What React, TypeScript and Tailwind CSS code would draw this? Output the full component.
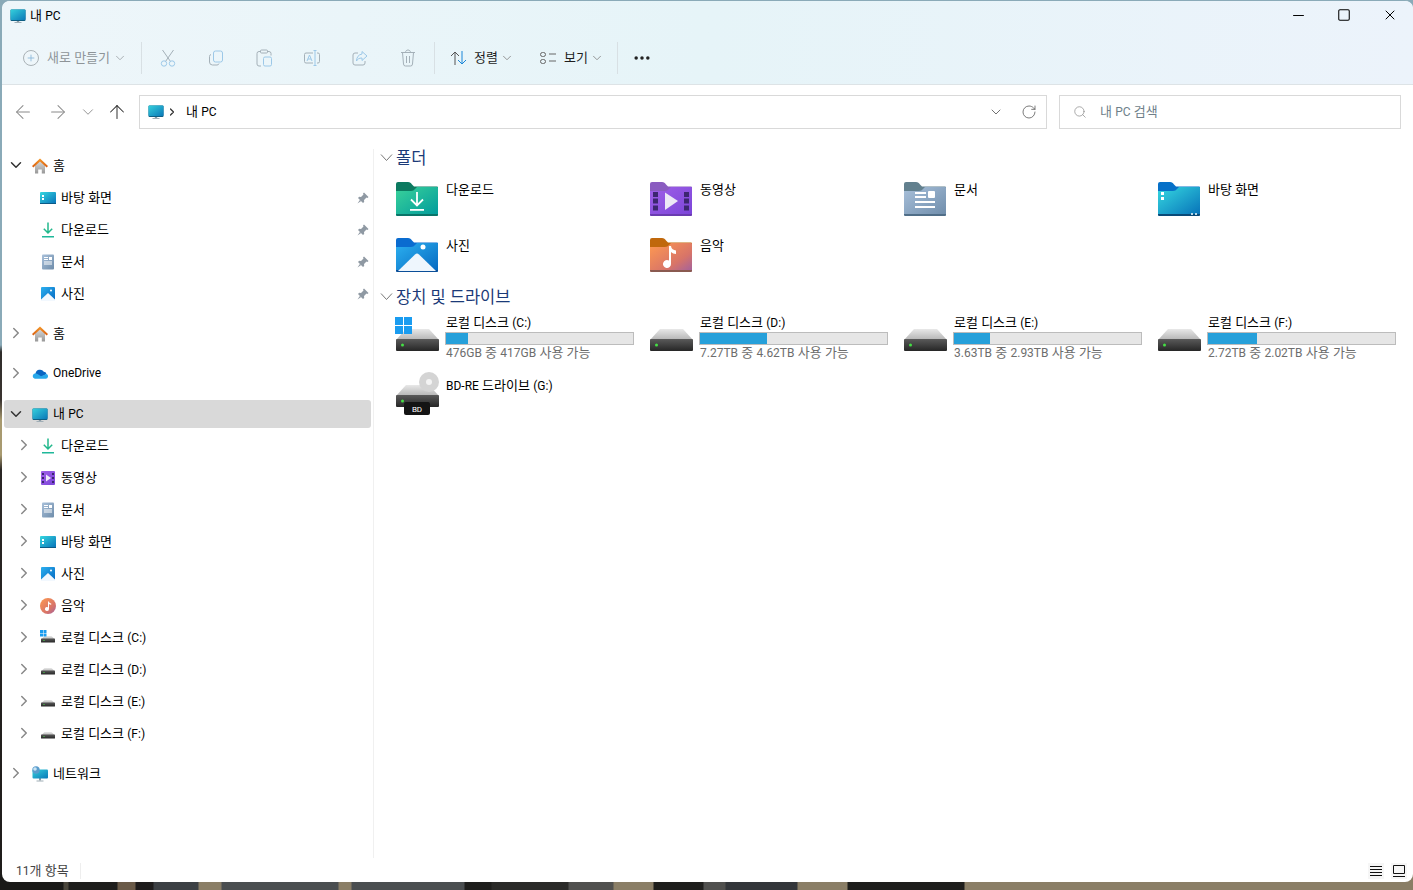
import React from 'react';
import { ChevronDown, ChevronRight, ArrowLeft, ArrowRight, ArrowUp, RotateCw, Search, Plus, MoreHorizontal, Minus, Square, X } from 'lucide-react';

const FONT = "font-['Roboto','Noto_Sans_CJK_KR',sans-serif]";

// Hangul sits a bit larger than the latin next to it, like Malgun Gothic does
function K({ t }: { t: string }) {
  return (
    <>
      {t.split(/([가-힣 ]+)/).map((part, i) =>
        /[가-힣]/.test(part) ? <span key={i} className="text-[13px]">{part}</span> : <span key={i}>{part}</span>
      )}
    </>
  );
}

function Defs() {
  return (
    <svg width="0" height="0" className="absolute">
      <defs>
        <linearGradient id="g-mon" x1="0" y1="0" x2="1" y2="1"><stop offset="0" stopColor="#35d0dc" /><stop offset="1" stopColor="#0a78b8" /></linearGradient>
        <linearGradient id="g-green" x1="0" y1="0" x2="1" y2="1"><stop offset="0" stopColor="#3ad29a" /><stop offset="1" stopColor="#009a9c" /></linearGradient>
        <linearGradient id="g-purple" x1="0" y1="0" x2="1" y2="1"><stop offset="0" stopColor="#a060e8" /><stop offset="1" stopColor="#7a44d8" /></linearGradient>
        <linearGradient id="g-doc" x1="0" y1="0" x2="1" y2="1"><stop offset="0" stopColor="#a8c0da" /><stop offset="1" stopColor="#6e8caa" /></linearGradient>
        <linearGradient id="g-desk" x1="0" y1="0" x2="1" y2="1"><stop offset="0" stopColor="#36d8e0" /><stop offset="1" stopColor="#0670b8" /></linearGradient>
        <linearGradient id="g-pic" x1="0" y1="0" x2="1" y2="1"><stop offset="0" stopColor="#2cb0f0" /><stop offset="1" stopColor="#0568c0" /></linearGradient>
        <linearGradient id="g-music" x1="0" y1="0" x2="1" y2="1"><stop offset="0" stopColor="#ff9a50" /><stop offset="0.65" stopColor="#d87468" /><stop offset="1" stopColor="#a060a0" /></linearGradient>
        <linearGradient id="g-drive" x1="0" y1="0" x2="0" y2="1"><stop offset="0" stopColor="#5a5a5a" /><stop offset="1" stopColor="#262626" /></linearGradient>
        <linearGradient id="g-top" x1="0" y1="0" x2="0" y2="1"><stop offset="0" stopColor="#e8e8e8" /><stop offset="1" stopColor="#b4b4b4" /></linearGradient>
        <linearGradient id="g-roof" x1="0" y1="0" x2="0" y2="1"><stop offset="0" stopColor="#f59a2a" /><stop offset="1" stopColor="#d85c10" /></linearGradient>
        <linearGradient id="g-house" x1="0" y1="0" x2="0" y2="1"><stop offset="0" stopColor="#d8d8d8" /><stop offset="1" stopColor="#989898" /></linearGradient>
      </defs>
    </svg>
  );
}

function Monitor({ size = 16 }: { size?: number }) {
  return (
    <svg width={size} height={size} viewBox="0 0 16 16" className="shrink-0">
      <rect x="6.800" y="12.500" width="2.400" height="2" fill="#8a9aa4" />
      <rect x="4.500" y="14" width="7" height="1" fill="#a0aeb6" />
      <rect x="0.500" y="1.500" width="15" height="11.500" rx="1" fill="#0d5f84" />
      <rect x="0.500" y="1.500" width="15" height="10.500" rx="1" fill="url(#g-mon)" />
    </svg>
  );
}

function Home() {
  return (
    <svg width="16" height="16" viewBox="0 0 16 16" className="shrink-0">
      <path d="M3 7.500 8 3l5 4.500V15.500h-3.200v-4H6.200v4H3z" fill="url(#g-house)" />
      <path d="M8 .5 0 8l1.300 1.500L8 3.500l6.700 6L16 8z" fill="url(#g-roof)" />
    </svg>
  );
}

function DeskSmall() {
  return (
    <svg width="16" height="16" viewBox="0 0 16 16" className="shrink-0">
      <rect x="0" y="2" width="16" height="12" rx="1" fill="url(#g-desk)" />
      <rect x="0" y="13" width="16" height="1" fill="#0c5a86" />
      <rect x="2" y="5" width="2" height="2" fill="#fff" />
      <rect x="2" y="8" width="2" height="2" fill="#fff" />
    </svg>
  );
}

function DownloadSmall() {
  return (
    <svg width="16" height="16" viewBox="0 0 16 16" className="shrink-0">
      <path d="M8 .5v10M3.800 6.800 8 11l4.200-4.200" fill="none" stroke="#22b88c" strokeWidth="1.500" />
      <rect x="2" y="14" width="12" height="1.500" fill="#1fb89a" />
    </svg>
  );
}

function DocSmall() {
  return (
    <svg width="16" height="16" viewBox="0 0 16 16" className="shrink-0">
      <rect x="2" y="0.500" width="12" height="15" rx="1" fill="url(#g-doc)" />
      <rect x="4" y="3" width="4" height="1" fill="#fff" /><rect x="4" y="5" width="4" height="1" fill="#fff" />
      <rect x="9" y="3" width="3" height="3" fill="#fff" />
      <rect x="4" y="7.500" width="8" height="1" fill="#fff" /><rect x="4" y="9.500" width="8" height="1" fill="#fff" />
    </svg>
  );
}

function PicSmall() {
  return (
    <svg width="16" height="16" viewBox="0 0 16 16" className="shrink-0">
      <rect x="1" y="1" width="14" height="14" rx="1" fill="url(#g-pic)" />
      <path d="M1 13.500 8 7l7 6.500V15H1z" fill="#f2f8fe" />
      <circle cx="11" cy="4.500" r="1" fill="#fff" />
    </svg>
  );
}

function VideoSmall() {
  return (
    <svg width="16" height="16" viewBox="0 0 16 16" className="shrink-0">
      <rect x="1" y="1" width="14" height="14" rx="1" fill="url(#g-purple)" />
      {[3, 7, 11].map(y => (
        <React.Fragment key={y}>
          <rect x="2" y={y} width="2" height="2" fill="#3c2670" />
          <rect x="12" y={y} width="2" height="2" fill="#3c2670" />
        </React.Fragment>
      ))}
      <path d="M6 4.500 11 8l-5 3.500z" fill="#efeafa" />
    </svg>
  );
}

function MusicSmall() {
  return (
    <svg width="16" height="16" viewBox="0 0 16 16" className="shrink-0">
      <circle cx="8" cy="8" r="8" fill="url(#g-music)" />
      <path d="M8 3.500h1c.2 1.300 1 1.800 2.200 2v1.300c-1 0-1.700-.3-2.200-.8V11a2 2 0 1 1-1-1.700z" fill="#fff" />
    </svg>
  );
}

function CloudIcon() {
  return (
    <svg width="16" height="16" viewBox="0 0 16 16" className="shrink-0">
      <path d="M3.500 8a4.500 4.500 0 0 1 8.300-2.200A3 3 0 0 1 14.500 8L8 12 3 9z" fill="#0a66c2" />
      <path d="M3.500 7.300A2.800 2.800 0 0 0 2.800 12.800H13.500a2.400 2.400 0 0 0 .8-4.700L9 10.200 5.500 8z" fill="#28a8ea" />
    </svg>
  );
}

function NetworkIcon() {
  return (
    <svg width="16" height="16" viewBox="0 0 16 16" className="shrink-0">
      <rect x="7" y="12" width="2" height="2.500" fill="#8a9aa4" />
      <rect x="4.500" y="14.500" width="7" height="1" fill="#a0aeb6" />
      <rect x="0.500" y="3.500" width="15.500" height="9" rx="1" fill="url(#g-mon)" />
      <circle cx="4" cy="4" r="3.700" fill="#5a9ccc" />
      <circle cx="3" cy="3" r="1.800" fill="#c8e4f4" />
    </svg>
  );
}

function DriveSmall({ win = false }: { win?: boolean }) {
  return (
    <svg width="16" height="16" viewBox="0 0 16 16" className="shrink-0">
      <path d="M1.500 9 4.500 6h7l3 3z" fill="url(#g-top)" />
      <rect x="1" y="8.500" width="14" height="4" rx="0.500" fill="url(#g-drive)" />
      <rect x="3.500" y="10" width="1" height="1" fill="#4ade4a" />
      {win && (
        <g fill="#1a9cf0">
          <rect x="0" y="0" width="3" height="3" /><rect x="3.500" y="0" width="3" height="3" />
          <rect x="0" y="3.500" width="3" height="3" /><rect x="3.500" y="3.500" width="3" height="3" />
        </g>
      )}
    </svg>
  );
}

function FolderShell({ tab, fill, edge, children }: { tab: string; fill: string; edge: string; children?: React.ReactNode }) {
  return (
    <svg width="44" height="36" viewBox="0 0 44 36" className="shrink-0">
      <path d="M1 34V3a2 2 0 0 1 2-2h10c2 0 3 1 4 2.500L19 5.500h23a1 1 0 0 1 1 1V12H1z" fill={tab} />
      <path d="M1 33.500V10l15 0c2 0 3-1 4-2l2-2h20a1 1 0 0 1 1 1v26.500a1.500 1.500 0 0 1-1.500 1.500h-39A1.500 1.500 0 0 1 1 33.500z" fill={fill} />
      <path d="M1 33.500a1.500 1.500 0 0 0 1.500 1.500h39a1.500 1.500 0 0 0 1.500-1.500V33H1z" fill={edge} />
      {children}
    </svg>
  );
}

const folders: Record<string, React.ReactNode> = {
  download: (
    <FolderShell tab="#0c7a60" fill="url(#g-green)" edge="#0a7468">
      <path d="M22 11v13M16 18.500l6 6 6-6" fill="none" stroke="#fff" strokeWidth="1.800" />
      <rect x="15" y="28" width="14" height="1.800" fill="#fff" />
    </FolderShell>
  ),
  video: (
    <FolderShell tab="#8a5cc0" fill="url(#g-purple)" edge="#6a3cb0">
      {[10, 16.500, 23.500].map(y => (
        <React.Fragment key={y}>
          <rect x="4" y={y + 1} width="5" height="5" fill="#3c2670" />
          <rect x="35" y={y + 1} width="5" height="5" fill="#3c2670" />
        </React.Fragment>
      ))}
      <path d="M16 11.500 29 20 16 29z" fill="#ece8f6" />
    </FolderShell>
  ),
  doc: (
    <FolderShell tab="#62808e" fill="url(#g-doc)" edge="#506e88">
      <rect x="12" y="11" width="11" height="2" fill="#fff" /><rect x="12" y="15" width="11" height="2" fill="#fff" />
      <rect x="25" y="10" width="7" height="7" rx="1" fill="#fff" />
      <rect x="12" y="20" width="20" height="2" fill="#fff" /><rect x="12" y="25" width="20" height="2" fill="#fff" />
    </FolderShell>
  ),
  desk: (
    <FolderShell tab="#0670c8" fill="url(#g-desk)" edge="#0a4a78">
      <rect x="4" y="11" width="3" height="3" fill="#fff" /><rect x="4" y="16" width="3" height="3" fill="#fff" />
      <rect x="34" y="32" width="2" height="2" fill="#b8d8e8" /><rect x="38" y="32" width="2" height="2" fill="#b8d8e8" />
    </FolderShell>
  ),
  pic: (
    <FolderShell tab="#0a6cd0" fill="url(#g-pic)" edge="#0a4e98">
      <path d="M3 34 20 17.500a3 3 0 0 1 4 0L41 34z" fill="#eef6fd" />
      <circle cx="28" cy="10" r="2.500" fill="#fff" />
    </FolderShell>
  ),
  music: (
    <FolderShell tab="#c0680c" fill="url(#g-music)" edge="#8a5a50">
      <path d="M20 9h2c.3 3 2.500 4 5 4.500v3.500c-2 0-3.800-.7-5-2V27a4 4 0 1 1-2-3.400z" fill="#fff" />
    </FolderShell>
  ),
};

function DriveLarge({ win = false, optical = false }: { win?: boolean; optical?: boolean }) {
  return (
    <svg width="46" height="46" viewBox="0 0 46 46" className="shrink-0">
      <path d="M1 26 11 15h23l10 11z" fill="url(#g-top)" />
      <rect x="1" y="25" width="43" height="12" rx="1" fill="url(#g-drive)" />
      <rect x="6" y="29.500" width="3" height="3" rx="1.500" fill="#44e044" />
      {win && (
        <g fill="#1a9cf0">
          <rect x="0" y="3" width="8" height="8" /><rect x="9" y="3" width="8" height="8" />
          <rect x="0" y="12" width="8" height="8" /><rect x="9" y="12" width="8" height="8" />
        </g>
      )}
      {optical && (
        <>
          <circle cx="34" cy="12" r="10" fill="#d4d4d4" />
          <circle cx="34" cy="12" r="3" fill="#f4f4f4" />
          <rect x="9" y="32" width="26" height="13" rx="2" fill="#141414" />
          <text x="22" y="42" textAnchor="middle" fontSize="8" fill="#fff">BD</text>
        </>
      )}
    </svg>
  );
}

function PinIcon() {
  return (
    <svg width="12" height="12" viewBox="0 0 12 12" className="shrink-0 mr-[2px] mt-[2px]" fill="#8f99a3">
      <path d="M7 .5 11.500 5l-1 1-1-.5L7 8l.2 2L6 11 1 6l1.200-1.200 1.800.2 2.500-2.500L6 1.500z" />
      <path d="M3 7.800.5 11.500 4.200 9z" />
    </svg>
  );
}

function NavRow({ icon, label, indent = 0, open, pin, sel, hideChevron }: { icon: React.ReactNode; label: string; indent?: number; open?: boolean; pin?: boolean; sel?: boolean; hideChevron?: boolean }) {
  return (
    <div className={`flex items-center ${sel ? 'h-7 my-px bg-[#d9d9d9] rounded-[3px]' : 'h-8'} ml-[2px] w-[367px] text-[12px] text-black`}>
      <div className={`flex items-center ${indent ? 'pl-[11px] w-[36px]' : 'pl-[3px] w-[28px]'} shrink-0`}>
        {!hideChevron && (open
          ? <ChevronDown size={18} strokeWidth={2} className="text-[#333]" />
          : <ChevronRight size={18} strokeWidth={2} className="text-[#888]" />)}
      </div>
      <span className="mt-px">{icon}</span>
      <span className={`ml-[5px] flex-1 leading-none ${sel ? '-mt-px' : ''}`}><K t={label} /></span>
      {pin && <PinIcon />}
    </div>
  );
}

function Sep() {
  return <div className="w-px h-8 bg-[#d8e0e4] mx-[2px] shrink-0" />;
}

function SectionHead({ label }: { label: string }) {
  return (
    <div className="flex items-center h-5 text-[16.500px] leading-none text-[#1b3a78]">
      <svg width="16" height="10" viewBox="0 0 16 10" fill="none" stroke="#777" className="shrink-0">
        <path d="M1 1.500 6.500 7.500 12 1.500" />
      </svg>
      <span className="mt-[3px]">{label}</span>
    </div>
  );
}

function FolderTile({ name, icon }: { name: string; icon: React.ReactNode }) {
  return (
    <div className="flex w-[254px] h-[56px] items-start">
      {icon}
      <span className="ml-[7px] mt-px text-[12px] leading-4 text-black"><K t={name} /></span>
    </div>
  );
}

function DriveTile({ name, total, free, pct }: { name: string; total: string; free: string; pct: string }) {
  return (
    <div className="flex w-[254px] h-[56px]">
      <DriveLarge win={name.includes('C:')} />
      <div className="ml-[4px] w-[189px] text-[12px]">
        <div className="leading-4 h-[18px] pt-px pl-px text-black whitespace-nowrap"><K t={name} /></div>
        <div className="h-[13px] bg-[#e6e6e6] border border-[#bcbcbc]">
          <div className={`h-full bg-[#26a0da] ${pct}`} />
        </div>
        <div className="leading-4 pl-px text-[#6d6d6d] whitespace-nowrap"><K t={`${total} 중 ${free} 사용 가능`} /></div>
      </div>
    </div>
  );
}

export default function App() {
  return (
    <div className={`w-[1413px] h-[890px] overflow-hidden flex flex-col bg-[linear-gradient(180deg,#8aaab8_0,#8aaab8_345px,#2e2c2a_352px,#3a3430_400px,#a89a70_420px,#a89a70_455px,#2a2624_470px,#1e1c1a_890px)] ${FONT}`}>
      <Defs />
      <div className="relative z-10 h-[882px] shrink-0 ml-[2px] bg-white rounded-lg border-t border-[#8aaab8] flex flex-col overflow-hidden">
        {/* title + command bar */}
        <div className="h-[84px] shrink-0 bg-gradient-to-r from-[#eef6fa] via-[#e6f4f8] to-[#ecf3fb] border-b border-[#dde3e6]">
          <div className="h-[30px] flex items-center pl-[8px] text-[12px] text-black">
            <Monitor />
            <span className="ml-[4px] flex-1"><K t="내 PC" /></span>
            <div className="flex items-center -mt-[2px]">
              <div className="w-[46px] flex justify-center"><Minus size={17} strokeWidth={1.400} /></div>
              <div className="w-[46px] flex justify-center"><Square size={14} strokeWidth={1.800} /></div>
              <div className="w-[46px] flex justify-center"><X size={16} strokeWidth={1.500} /></div>
            </div>
          </div>
          <div className="h-[53px] flex items-center pl-[21px] text-[12px]">
            <div className="flex items-center w-[116px] text-[#8e9498]">
              <span className="w-[16px] h-[16px] rounded-full border border-[#aab2b6] flex items-center justify-center"><Plus size={10} className="text-[#88b4d8]" /></span>
              <span className="ml-[8px]"><K t="새로 만들기" /></span>
              <ChevronDown size={14} strokeWidth={1.500} className="ml-[3px] text-[#a0a6aa]" />
            </div>
            <Sep />
            {/* cut */}
            <div className="w-12 flex justify-center">
              <svg width="16" height="18" viewBox="0 0 16 18" fill="none" stroke="#a4b0b8">
                <path d="M2.500 1 10.500 12.500M13.500 1 5.500 12.500" />
                <circle cx="4" cy="14.500" r="2.700" stroke="#9cc8e8" /><circle cx="12" cy="14.500" r="2.700" stroke="#9cc8e8" />
              </svg>
            </div>
            {/* copy */}
            <div className="w-12 flex justify-center">
              <svg width="16" height="16" viewBox="0 0 16 16" fill="none">
                <rect x="5.500" y="1" width="9" height="11" rx="2" stroke="#9cc8e8" />
                <path d="M3 4.500A2 2 0 0 0 1.500 6.500V12a3 3 0 0 0 3 3H9a2 2 0 0 0 2-1.500" stroke="#a4b0b8" />
              </svg>
            </div>
            {/* paste */}
            <div className="w-12 flex justify-center">
              <svg width="16" height="18" viewBox="0 0 16 18" fill="none">
                <path d="M4.500 2.500H3a2 2 0 0 0-2 2V15a2 2 0 0 0 2 2h2M11.500 2.500H13a2 2 0 0 1 2 2v2" stroke="#a4b0b8" />
                <rect x="4.500" y="1" width="7" height="3" rx="1" stroke="#a4b0b8" />
                <rect x="7.500" y="8" width="8" height="9" rx="1.500" stroke="#9cc8e8" />
              </svg>
            </div>
            {/* rename */}
            <div className="w-12 flex justify-center">
              <svg width="16" height="16" viewBox="0 0 16 16" fill="none">
                <path d="M9 3H2a1.500 1.500 0 0 0-1.500 1.500v7A1.500 1.500 0 0 0 2 13h7M13 3h1a1.500 1.500 0 0 1 1.500 1.500v7A1.500 1.500 0 0 1 14 13h-1" stroke="#a4b0b8" />
                <path d="M3 11 5.500 5l2.500 6M4 9h3" stroke="#9cc8e8" />
                <path d="M11 .5v15M9.500.5h3M9.500 15.500h3" stroke="#9cc8e8" />
              </svg>
            </div>
            {/* share */}
            <div className="w-12 flex justify-center">
              <svg width="16" height="16" viewBox="0 0 16 16" fill="none">
                <path d="M6 3H3a2 2 0 0 0-2 2v8a2 2 0 0 0 2 2h8a2 2 0 0 0 2-2v-2" stroke="#a4b0b8" />
                <path d="M10 1.500 15 6l-5 4.500V8c-3 0-4.500 1-5.500 3C4.500 7.500 6.500 4.500 10 4z" stroke="#9cc8e8" />
              </svg>
            </div>
            {/* delete */}
            <div className="w-12 flex justify-center">
              <svg width="16" height="18" viewBox="0 0 16 18" fill="none" stroke="#a4b0b8">
                <path d="M1 3.500h14M5.500 3.500C5.500 2 6.500 1 8 1s2.500 1 2.500 2.500M2.500 3.500 3.500 15a2 2 0 0 0 2 2h5a2 2 0 0 0 2-2l1-11.500M6.500 7v7M9.500 7v7" />
              </svg>
            </div>
            <Sep />
            <div className="flex items-center ml-[13px] w-[89px] text-[#1e1e1e] shrink-0">
              <svg width="18" height="16" viewBox="0 0 18 16" fill="none"><path d="M5 15V2M1 6l4-4 4 4" stroke="#555" /><path d="M12 1v13M8 10l4 4 4-4" stroke="#1a86d8" /></svg>
              <span className="ml-[6px]"><K t="정렬" /></span>
              <ChevronDown size={14} strokeWidth={1.500} className="ml-[2px] text-[#888]" />
            </div>
            <div className="flex items-center w-[76px] text-[#1e1e1e] shrink-0">
              <svg width="17" height="16" viewBox="0 0 17 16" fill="none" stroke="#666"><rect x="1.500" y="2.500" width="5" height="4" rx="2" /><rect x="1.500" y="9.500" width="5" height="4" rx="2" /><path d="M10 4h7M10 11h7" /></svg>
              <span className="ml-[8px]"><K t="보기" /></span>
              <ChevronDown size={14} strokeWidth={1.500} className="ml-[2px] text-[#888]" />
            </div>
            <Sep />
            <MoreHorizontal size={20} strokeWidth={2.200} className="ml-[12px] text-[#222]" />
          </div>
        </div>

        {/* address row */}
        <div className="h-[64px] shrink-0 flex items-center pb-[10px] pr-[12px]">
          <div className="flex items-center w-[137px] text-[#8a8a8a] pl-[10px] shrink-0">
            <ArrowLeft size={22} strokeWidth={1.100} />
            <ArrowRight size={22} strokeWidth={1.100} className="ml-[13px]" />
            <ChevronDown size={18} strokeWidth={1.200} className="ml-[10px]" />
            <ArrowUp size={22} strokeWidth={1.100} className="ml-[9px] text-[#333]" />
          </div>
          <div className="w-[908px] h-[34px] shrink-0 border border-[#d9d9d9] flex items-center pl-[8px] pr-[9px] text-[12px]">
            <Monitor />
            <ChevronRight size={12} strokeWidth={2.500} className="ml-[2px] text-[#333]" />
            <span className="ml-[8px] flex-1"><K t="내 PC" /></span>
            <ChevronDown size={16} strokeWidth={1.400} className="text-[#666]" />
            <RotateCw size={16} strokeWidth={1.300} className="ml-[17px] text-[#666]" />
          </div>
          <div className="ml-[12px] flex-1 h-[34px] border border-[#d9d9d9] flex items-center pl-[13px] text-[12px] text-[#6f7f8a]">
            <Search size={14} strokeWidth={1.200} className="text-[#888]" />
            <span className="ml-[13px]"><K t="내 PC 검색" /></span>
          </div>
        </div>

        {/* body */}
        <div className="flex flex-1 min-h-0">
          <aside className="w-[372px] shrink-0 border-r border-[#f0f0f0] flex flex-col">
            <NavRow open icon={<Home />} label="홈" />
            <NavRow indent={1} hideChevron pin icon={<DeskSmall />} label="바탕 화면" />
            <NavRow indent={1} hideChevron pin icon={<DownloadSmall />} label="다운로드" />
            <NavRow indent={1} hideChevron pin icon={<DocSmall />} label="문서" />
            <NavRow indent={1} hideChevron pin icon={<PicSmall />} label="사진" />
            <div className="h-2 shrink-0" />
            <NavRow icon={<Home />} label="홈" />
            <div className="h-2 shrink-0" />
            <NavRow icon={<CloudIcon />} label="OneDrive" />
            <div className="h-[10px] shrink-0" />
            <NavRow sel open icon={<Monitor />} label="내 PC" />
            <NavRow indent={1} icon={<DownloadSmall />} label="다운로드" />
            <NavRow indent={1} icon={<VideoSmall />} label="동영상" />
            <NavRow indent={1} icon={<DocSmall />} label="문서" />
            <NavRow indent={1} icon={<DeskSmall />} label="바탕 화면" />
            <NavRow indent={1} icon={<PicSmall />} label="사진" />
            <NavRow indent={1} icon={<MusicSmall />} label="음악" />
            <NavRow indent={1} icon={<DriveSmall win />} label="로컬 디스크 (C:)" />
            <NavRow indent={1} icon={<DriveSmall />} label="로컬 디스크 (D:)" />
            <NavRow indent={1} icon={<DriveSmall />} label="로컬 디스크 (E:)" />
            <NavRow indent={1} icon={<DriveSmall />} label="로컬 디스크 (F:)" />
            <div className="h-2 shrink-0" />
            <NavRow icon={<NetworkIcon />} label="네트워크" />
          </aside>
          <main className="flex-1 pl-[6px] -mt-[1px]">
            <SectionHead label="폴더" />
            <div className="flex flex-wrap mt-[13px] ml-[15px] w-[1020px]">
              <FolderTile name="다운로드" icon={folders.download} />
              <FolderTile name="동영상" icon={folders.video} />
              <FolderTile name="문서" icon={folders.doc} />
              <FolderTile name="바탕 화면" icon={folders.desk} />
              <FolderTile name="사진" icon={folders.pic} />
              <FolderTile name="음악" icon={folders.music} />
            </div>
            <div className="-mt-[6px]"><SectionHead label="장치 및 드라이브" /></div>
            <div className="flex flex-wrap mt-[7px] ml-[15px] w-[1020px]">
              <DriveTile name="로컬 디스크 (C:)" total="476GB" free="417GB" pct="w-[12%]" />
              <DriveTile name="로컬 디스크 (D:)" total="7.27TB" free="4.62TB" pct="w-[36%]" />
              <DriveTile name="로컬 디스크 (E:)" total="3.63TB" free="2.93TB" pct="w-[19%]" />
              <DriveTile name="로컬 디스크 (F:)" total="2.72TB" free="2.02TB" pct="w-[26%]" />
              <div className="flex w-[254px]">
                <DriveLarge optical />
                <span className="ml-[5px] mt-[8px] text-[12px] leading-4 whitespace-nowrap"><K t="BD-RE 드라이브 (G:)" /></span>
              </div>
            </div>
          </main>
        </div>

        {/* status bar */}
        <div className="h-[24px] shrink-0 flex items-center pl-[14px] pr-[6px] pt-[2px] text-[12px] text-[#444]">
          <span><K t="11개 항목" /></span>
          <div className="w-px h-4 bg-[#eee] ml-[11px]" />
          <div className="flex-1" />
          <div className="w-[16px] h-[16px] bg-[#f6f6f6] mr-[1px]">
            <svg width="16" height="16" viewBox="0 0 16 16" stroke="#111" fill="none"><path d="M2 3.500h12M2 6.500h12M2 9.500h12M2 12.500h12" /></svg>
          </div>
          <div className="w-[16px] h-[16px] bg-[#f6f6f6] ml-[6px]">
            <svg width="16" height="16" viewBox="0 0 16 16" stroke="#111" fill="none"><path d="M2.500 2.500h11v8h-11zM2 13.500h12" /></svg>
          </div>
        </div>
      </div>
      {/* wallpaper showing under the window */}
      <div className="h-[16px] -mt-[8px] shrink-0 bg-[linear-gradient(90deg,#1a1a18_63px,#4a463c_64px,#4a463c_68px,#1e1e1c_69px,#1e1e1c_117px,#6a5a48_118px,#6a5a48_135px,#1e1c1c_136px,#1e1c1c_153px,#3c4044_154px,#3c4044_198px,#8a7e66_199px,#8a7e66_221px,#4a4e50_222px,#4a4e50_338px,#8a7e66_339px,#8a7e66_351px,#4a4e50_352px,#4a4e50_464px,#1e1e1c_465px,#1e1e1c_491px,#2a2a28_492px,#2a2a28_568px,#50504e_569px,#50504e_613px,#8a7e66_614px,#8a7e66_653px,#1e1e1c_654px,#1e1e1c_703px,#50504e_704px,#50504e_725px,#33363a_726px,#33363a_797px,#8a7e66_798px,#8a7e66_847px,#1e1e1c_848px,#1e1e1c_964px,#8a7e66_965px)]" />
    </div>
  );
}
